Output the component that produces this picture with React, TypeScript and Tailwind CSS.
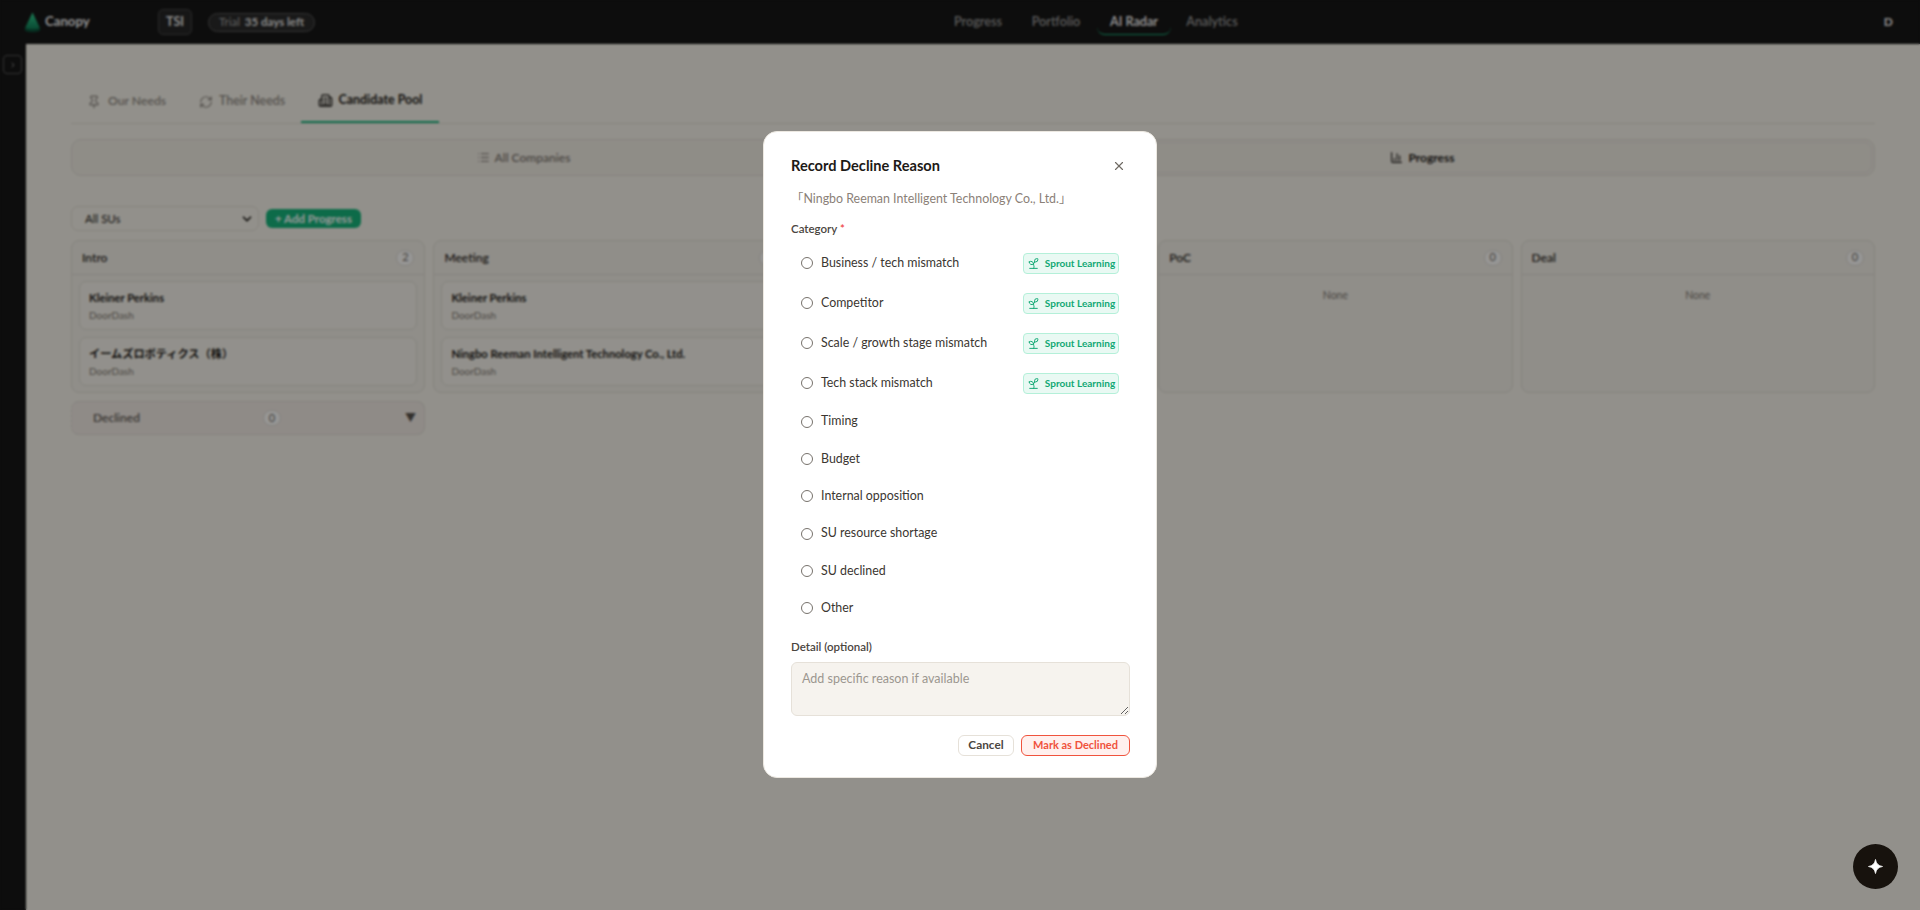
import React from "react";
import { Pin, RefreshCw, Building2, List, ChartColumn, Sprout, X, ChevronDown, ChevronRight } from "lucide-react";

const font = { fontFamily: '"Lato", "Noto Sans CJK JP", sans-serif' };

function Badge({ n }: { n: number }) {
  return (
    <span className="flex h-[16px] w-[18px] items-center justify-center rounded-full border border-[#dcd8d1] bg-[#fbfaf8] text-[11px] text-[#6f6a64]">
      {n}
    </span>
  );
}

function Card({ title }: { title: string }) {
  return (
    <div className="flex h-[49px] flex-col justify-center rounded-[7px] border border-[#dedad2] bg-[#f4f1e9] px-[9px]">
      <div className="truncate text-[11.2px] font-bold leading-[18px] text-[#1d1a17]">{title}</div>
      <div className="mt-[1px] text-[10px] leading-[14px] text-[#7d7770]">DoorDash</div>
    </div>
  );
}

function Column({ title, count, cards }: { title: string; count: number; cards: string[] }) {
  return (
    <div className="min-w-0 rounded-[8px] border border-[#dedad2] bg-[#f0ede5]">
      <div className="flex h-[34px] items-center justify-between border-b border-[#dedad2] pl-[10px] pr-[10px]">
        <span className="text-[12px] font-semibold text-[#2f2b26]">{title}</span>
        <Badge n={count} />
      </div>
      {cards.length ? (
        <div className="flex flex-col gap-[7px] px-[7px] pb-[6px] pt-[6px]">
          {cards.map((c) => (
            <Card key={c} title={c} />
          ))}
        </div>
      ) : (
        <div className="h-[117px] pt-[13px] text-center text-[10.5px] text-[#7d7770]">None</div>
      )}
    </div>
  );
}

function Option({ label, learn }: { label: string; learn?: boolean }) {
  return (
    <div className={`flex items-center pl-[10px] pr-[10px] ${learn ? "h-[40px]" : "h-[37.3px]"}`}>
      <span className="h-[12px] w-[12px] shrink-0 rounded-full border border-[#77726c] bg-white" />
      <span className="ml-[8px] text-[12.4px] text-[#3b3631]">{label}</span>
      {learn && (
        <span className="ml-auto flex h-[21px] w-[96px] items-center justify-center gap-[5px] rounded-[4px] border border-[#b4f0d9] bg-[#e9f9f3] text-[10px] font-bold text-[#10a873]">
          <Sprout size={13} strokeWidth={1.8} />
          Sprout Learning
        </span>
      )}
    </div>
  );
}

export default function App() {
  return (
    <div className="flex h-[910px] flex-col overflow-hidden bg-[#f4f1e8]" style={font}>
      <header className="flex h-[44px] shrink-0 items-center bg-[#161616] pl-[24px] pr-[27px]">
        <svg width="17" height="21" viewBox="0 0 17 21" className="shrink-0">
          <defs>
            <linearGradient id="tree" x1="0" y1="0" x2="0" y2="1">
              <stop offset="0" stopColor="#2fd08f" />
              <stop offset="1" stopColor="#0f7a54" />
            </linearGradient>
          </defs>
          <ellipse cx="8.5" cy="17.5" rx="8" ry="2.8" fill="#0b4d36" />
          <path d="M8.5 0.5 L16 16 Q8.5 18.5 1 16 Z" fill="url(#tree)" />
        </svg>
        <span className="ml-[4px] w-[113px] text-[13.2px] font-bold text-[#eeeeee]">Canopy</span>
        <span className="flex h-[26px] w-[34px] items-center justify-center rounded-[5px] border border-[#444] bg-[#262626] text-[12.5px] font-bold text-[#e6e6e6]">
          TSI
        </span>
        <span className="ml-[16px] flex h-[19px] w-[107px] items-center justify-center gap-[5px] rounded-full border border-[#555] bg-[#2a2a2a] text-[11.5px]">
          <span className="text-[#a5a5a5]">Trial</span>
          <span className="font-bold text-[#e2e2e2]">35 days left</span>
        </span>
        <nav className="ml-[626px] flex items-center gap-[4px] text-[12.7px] font-semibold text-[#9b9b9b]">
          <span className="flex h-[26px] w-[74px] items-center justify-center">Progress</span>
          <span className="flex h-[26px] w-[74px] items-center justify-center">Portfolio</span>
          <span className="flex h-[26px] w-[74px] items-center justify-center rounded-b-[8px] border-b border-[#17b37b] text-white">AI Radar</span>
          <span className="flex h-[26px] w-[74px] items-center justify-center">Analytics</span>
        </nav>
        <span className="ml-auto text-[12px] font-bold text-[#eeeeee]">D</span>
      </header>

      <div className="flex min-h-0 flex-1">
        <aside className="w-[26px] shrink-0 bg-[#161616] pl-[3px] pt-[11px]">
          <span className="flex h-[19px] w-[19px] items-center justify-center rounded-[4px] border border-[#555] text-[#c0c0c0]">
            <ChevronRight size={8} />
          </span>
        </aside>
        <main className="min-w-0 flex-1 pl-[45px] pr-[45px] pt-[36px] text-[#3c3732]">
          <div className="flex h-[44px] border-b border-[#dedad2] pl-[6px]">
            <div className="flex w-[105px] items-center gap-[7px] pl-[10px] text-[12.2px] font-semibold text-[#8f8983]">
              <Pin size={14} /> Our Needs
            </div>
            <div className="flex w-[119px] items-center gap-[6px] pl-[17px] text-[12.4px] font-semibold text-[#8f8983]">
              <RefreshCw size={14} /> Their Needs
            </div>
            <div className="flex w-[138px] items-center justify-center gap-[6px] border-b-2 border-[#17b37b] text-[12.4px] font-bold text-[#1d1a17]">
              <Building2 size={15} /> Candidate Pool
            </div>
          </div>

          <div className="mt-[15px] grid h-[37px] grid-cols-2 rounded-[10px] border border-[#dedad2] bg-[#efebe2] p-[2px]">
            <div className="flex items-center justify-center gap-[5px] text-[12px] font-semibold text-[#7d7770]">
              <List size={13} /> All Companies
            </div>
            <div className="flex items-center justify-center gap-[5px] rounded-[8px] border border-[#e4e0d8] bg-[#efebe2] text-[12px] font-bold text-[#1d1a17]">
              <ChartColumn size={13} /> Progress
            </div>
          </div>

          <div className="mt-[30px] flex items-center gap-[7px]">
            <div className="flex h-[25px] w-[188px] items-center justify-between rounded-[7px] border border-[#dedad2] bg-[#f4f1e8] pl-[13px] pr-[4px] text-[11.5px] text-[#1d1a17]">
              All SUs
              <ChevronDown size={14} strokeWidth={3} />
            </div>
            <span className="flex h-[19px] w-[95px] items-center justify-center rounded-[6px] bg-[#17b37b] text-[11.5px] font-bold text-white">
              + Add Progress
            </span>
          </div>

          <div className="mt-[9px] grid grid-cols-5 gap-[8px]">
            <Column title="Intro" count={2} cards={["Kleiner Perkins", "イームズロボティクス（株）"]} />
            <Column title="Meeting" count={2} cards={["Kleiner Perkins", "Ningbo Reeman Intelligent Technology Co., Ltd."]} />
            <Column title="Pilot" count={0} cards={[]} />
            <Column title="PoC" count={0} cards={[]} />
            <Column title="Deal" count={0} cards={[]} />
          </div>

          <div className="mt-[8px] flex h-[34px] w-[354px] items-center rounded-[8px] border border-[#dedad2] bg-[#efe8e2] pl-[21px] pr-[8px] [border-left-style:dashed]">
            <span className="w-[170px] text-[12px] font-semibold text-[#5f5a54]">Declined</span>
            <Badge n={0} />
            <span className="ml-auto text-[11px] text-[#57524c]">▼</span>
          </div>
        </main>
      </div>

      <div className="fixed inset-0 flex items-start justify-center bg-black/40 pt-[131px] backdrop-blur-[1px]">
        <div className="h-[647px] w-[394px] rounded-[14px] border border-[#ece8e1] bg-white pl-[27px] pr-[26px] pt-[22px]">
          <div className="flex h-[24px] items-center justify-between">
            <span className="text-[14.6px] font-bold text-[#1d1a17]">Record Decline Reason</span>
            <X size={14} className="mr-[4px] text-[#6f6a64]" />
          </div>
          <div className="mt-[11px] h-[20px] text-[12.4px] leading-[20px] text-[#8b8178]">「Ningbo Reeman Intelligent Technology Co., Ltd.」</div>
          <div className="mt-[12px] text-[11.5px] font-semibold leading-[16px] text-[#4b463f]">
            Category <span className="text-[#ef4444]">*</span>
          </div>
          <div className="mt-[6px] pr-[1px]">
            <Option label="Business / tech mismatch" learn />
            <Option label="Competitor" learn />
            <Option label="Scale / growth stage mismatch" learn />
            <Option label="Tech stack mismatch" learn />
            <Option label="Timing" />
            <Option label="Budget" />
            <Option label="Internal opposition" />
            <Option label="SU resource shortage" />
            <Option label="SU declined" />
            <Option label="Other" />
          </div>
          <div className="mt-[12px] text-[11.5px] font-semibold leading-[16px] text-[#4b463f]">Detail (optional)</div>
          <textarea
            readOnly
            placeholder="Add specific reason if available"
            className="mt-[7px] block h-[54px] w-full rounded-[6px] border border-[#e6e1d9] bg-[#f6f3ee] px-[10px] py-[7px] text-[12.5px] placeholder:text-[#9c9790]"
          />
          <div className="mt-[19px] flex justify-end gap-[7px]">
            <span className="flex h-[21px] w-[56px] items-center justify-center rounded-[6px] border border-[#e6e1d9] text-[11.8px] font-bold text-[#4b463f]">Cancel</span>
            <span className="flex h-[21px] w-[109px] items-center justify-center rounded-[6px] border border-[#f0533d] bg-[#fff0ee] text-[11px] font-bold text-[#f0533d]">Mark as Declined</span>
          </div>
        </div>
      </div>

      <div className="fixed bottom-[21px] right-[22px] flex h-[45px] w-[45px] items-center justify-center rounded-full bg-[#17120d]">
        <svg width="15" height="15" viewBox="0 0 16 16">
          <path d="M8 0.5 C8.8 5 11 7.2 15.5 8 C11 8.8 8.8 11 8 15.5 C7.2 11 5 8.8 0.5 8 C5 7.2 7.2 5 8 0.5 Z" fill="#fff" stroke="#fff" strokeWidth="0.8" strokeLinejoin="round" />
        </svg>
      </div>
    </div>
  );
}
